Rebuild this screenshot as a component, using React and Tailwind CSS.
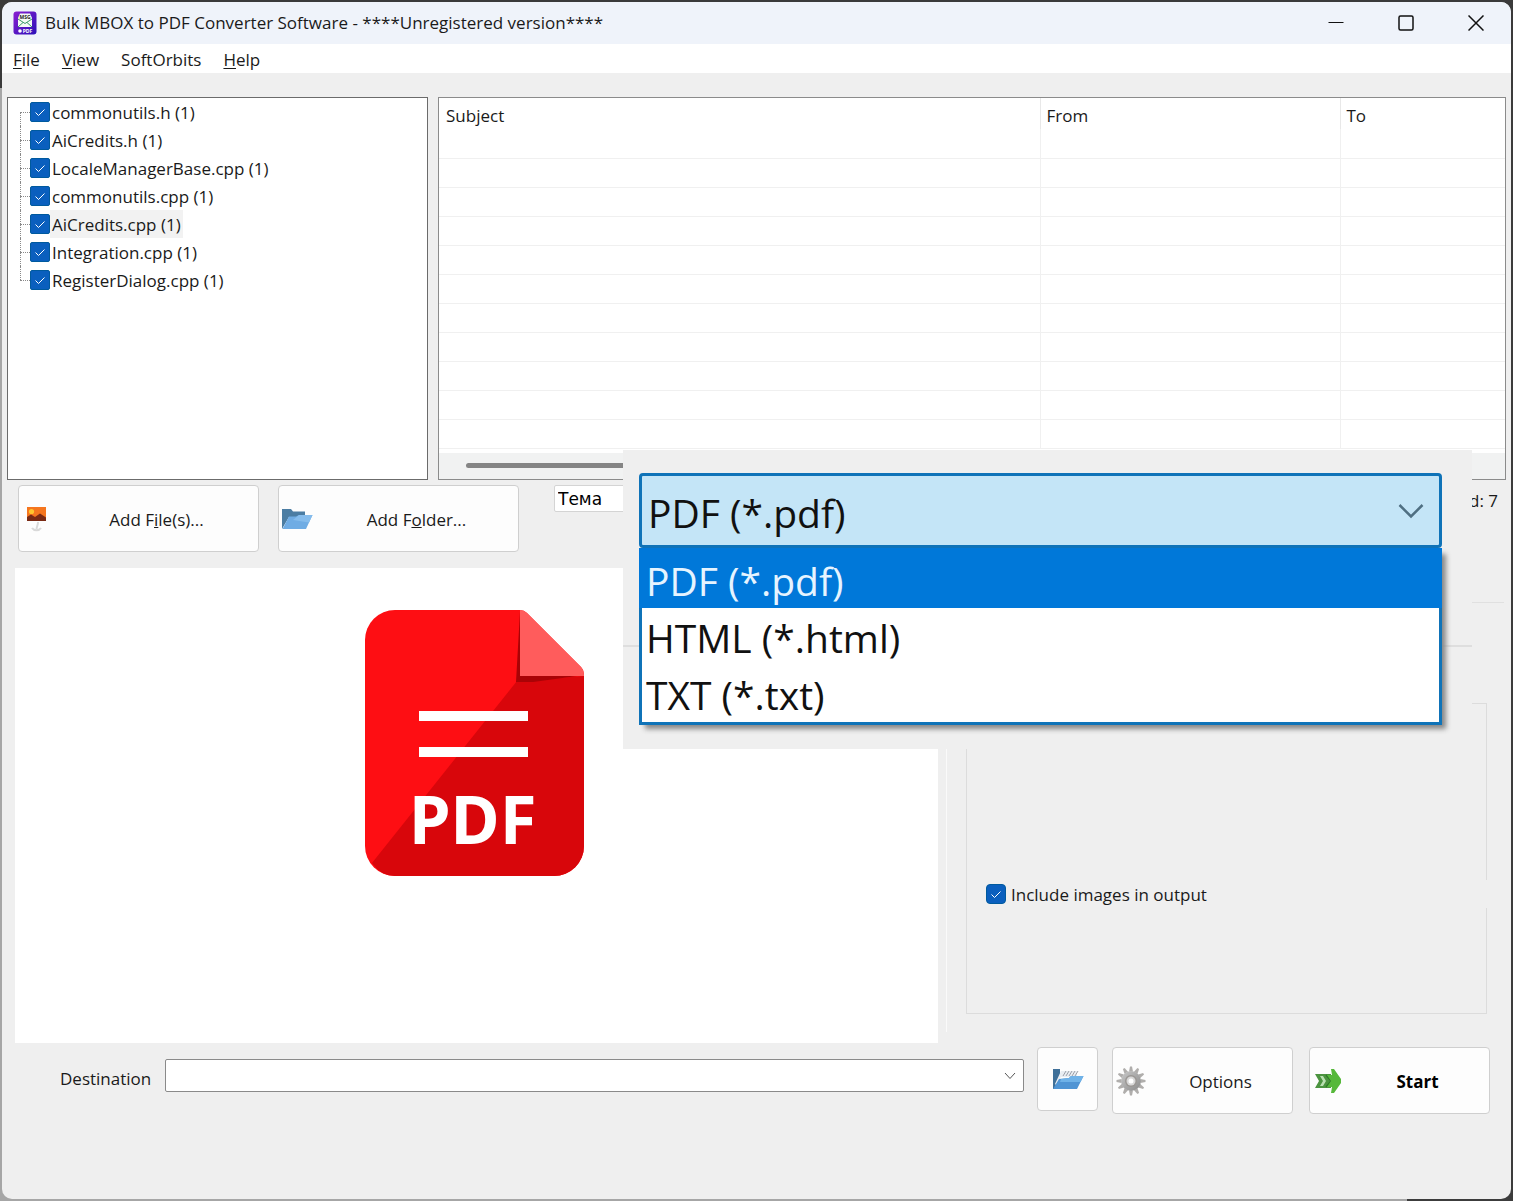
import { useState } from "react"

const MENU = [
    { key: "F", rest: "ile" },
    { key: "V", rest: "iew" },
    { key: "", rest: "SoftOrbits" },
    { key: "H", rest: "elp" },
]

const FILES = [
    "commonutils.h (1)",
    "AiCredits.h (1)",
    "LocaleManagerBase.cpp (1)",
    "commonutils.cpp (1)",
    "AiCredits.cpp (1)",
    "Integration.cpp (1)",
    "RegisterDialog.cpp (1)",
]

const FORMATS = ["PDF (*.pdf)", "HTML (*.html)", "TXT (*.txt)"]

function AppIcon() {
    return (
        <svg width="24" height="24" viewBox="0 0 24 24" aria-hidden="true">
            <defs>
                <linearGradient id="appBg" x1="0" y1="0" x2="1" y2="1">
                    <stop offset="0" stopColor="#8a1fd0" />
                    <stop offset="1" stopColor="#2a10b8" />
                </linearGradient>
            </defs>
            <rect x="0.5" y="0.5" width="23" height="23" rx="3" fill="url(#appBg)" />
            <path d="M5 7 L7 2.500 H17 L19 7 V16 H5 Z" fill="#f4fbf4" />
            <path d="M5 8 L12 12.500 L19 8 M5 16 L10 11.500 M19 16 L14 11.500" fill="none" stroke="#3a9a6a" strokeWidth="1" />
            <text x="12" y="7.5" textAnchor="middle" fontSize="5" fontWeight="700" fontFamily="Open Sans, sans-serif" fill="#222">
                MSG
            </text>
            <circle cx="7" cy="20" r="1.8" fill="#fff" />
            <text x="14.5" y="22" textAnchor="middle" fontSize="5" fontWeight="700" fontFamily="Open Sans, sans-serif" fill="#fff">
                PDF
            </text>
        </svg>
    )
}

function PictureIcon() {
    return (
        <svg width="22" height="26" viewBox="0 0 22 26" aria-hidden="true">
            <rect x="1" y="1" width="19" height="14" fill="#f5761f" />
            <circle cx="5.500" cy="5.500" r="2.600" fill="#ffc62e" />
            <path d="M1 11 L5 8.500 L9 11 L14 7.500 L20 11.500 V15 H1 Z" fill="#7a2a14" />
            <path d="M12 16 C12 19 11 20 10.500 23 M6 22 C8 25 13 25 15 22" fill="none" stroke="#d9d9d9" strokeWidth="2" />
        </svg>
    )
}

function FolderIcon() {
    return (
        <svg width="32" height="22" viewBox="0 0 32 22" aria-hidden="true">
            <path d="M1 21 V1 H10 L12 3.5 H24 V9 H8 Z" fill="#4b7da3" />
            <path d="M1.500 21 L8 8.500 H15 L18 7 H31.500 L25 21 Z" fill="#6face4" />
            <path d="M18 7 H31.500 L28 14.500 L12 12 Z" fill="#85bcec" />
        </svg>
    )
}

function OpenFolderIcon() {
    return (
        <svg width="32" height="22" viewBox="0 0 32 22" aria-hidden="true">
            <path d="M1 21 V1 H8 V8 L3 21 Z" fill="#3f7099" />
            <path d="M3 16 L9 3 H25 V9 H9 L4 17 Z" fill="#e9edf2" />
            <path d="M11 8 L14 3 M14 8 L17 3 M17 8 L20 3 M20 8 L23 3 M23 8 L26 3" stroke="#9b9fa8" strokeWidth="1" />
            <path d="M1 21 L7 11 L17 10 L19 8 H31.500 L25 21 Z" fill="#4f94d4" />
            <path d="M19 8 H31.500 L28.500 14 L8 14 L9 11 L17 10 Z" fill="#6fb2e8" />
        </svg>
    )
}

function GearIcon() {
    const teeth = [0, 30, 60, 90, 120, 150, 180, 210, 240, 270, 300, 330]
    return (
        <svg width="30" height="30" viewBox="0 0 30 30" aria-hidden="true">
            <defs>
                <linearGradient id="gear" x1="0" y1="0" x2="1" y2="1">
                    <stop offset="0" stopColor="#c8c8c8" />
                    <stop offset="1" stopColor="#8a8a8a" />
                </linearGradient>
            </defs>
            {teeth.map((a) => (
                <path key={a} d="M13 5.500 L14 0.500 H16 L17 5.500 Z" fill="#b0aeac" transform={`rotate(${a} 15 15)`} />
            ))}
            <circle cx="15" cy="15" r="10" fill="url(#gear)" />
            <circle cx="15" cy="15" r="6" fill="#9a9794" />
            <circle cx="15" cy="15" r="4.500" fill="#d8d8d8" />
            <circle cx="15" cy="15" r="2.500" fill="#fff" />
        </svg>
    )
}

function StartIcon() {
    return (
        <svg width="28" height="26" viewBox="0 0 28 26" aria-hidden="true">
            <path d="M1 6 H17 V20 H1 L5 13 Z" fill="#4c9440" />
            <path d="M6 8 H9 L12 13 L9 18 H6 L9 13 Z" fill="#b9dfb0" />
            <path d="M12 7 L17 13 L12 19" fill="none" stroke="#2f7a28" strokeWidth="1.500" />
            <path d="M17 1 H20 L27 11 V15 L20 25 H17 L18 19 H13 L17 13 L13 7 H18 Z" fill="#56b83a" />
        </svg>
    )
}

function PdfPicture() {
    return (
        <svg width="220" height="266" viewBox="0 0 220 266" aria-hidden="true">
            <path
                d="M30 0 H155 Q159 0 162 3 L216 57 Q219 60 219 64 V236 A30 30 0 0 1 189 266 H30 A30 30 0 0 1 0 236 V30 A30 30 0 0 1 30 0 Z"
                fill="#fe0e13"
            />
            <path d="M152 71 L219 66 V236 A30 30 0 0 1 189 266 H30 Q16 266 7 253 Z" fill="#d8060b" />
            <path d="M155 2 L151 72 L168 72 L212 66 L155 66 Z" fill="#a90306" />
            <path d="M155 0 Q159 0 162 3 L216 57 Q219 60 219 66 H155 Z" fill="#ff5c5c" />
            <rect x="54" y="101" width="109" height="10" fill="#fff" />
            <rect x="54" y="137" width="109" height="10" fill="#fff" />
            <text x="44" y="234" fontSize="67" fontWeight="700" fontFamily="Noto Sans, sans-serif" fill="#fff">
                PDF
            </text>
        </svg>
    )
}

function CheckBox({ id, className }) {
    const [checked, setChecked] = useState(true)
    return (
        <span className="grid size-5 shrink-0">
            <input
                id={id}
                type="checkbox"
                checked={checked}
                onChange={(e) => setChecked(e.target.checked)}
                className={`col-start-1 row-start-1 size-5 appearance-none border border-[#005a9e] bg-white checked:bg-[#0a5fbe] ${className}`}
            />
            <svg className="pointer-events-none col-start-1 row-start-1" width="20" height="20" viewBox="0 0 20 20" aria-hidden="true">
                <path d="M5.500 10.500 L8.500 13.500 L14.500 7.500" fill="none" stroke="#fff" strokeWidth="1" />
            </svg>
        </span>
    )
}

function ToolButton({ icon, className, children }) {
    return (
        <button type="button" className={`flex h-[67px] items-center rounded border border-[#cfcfcf] bg-[#fdfdfd] ${className}`}>
            <span className="flex w-9 shrink-0 justify-center">{icon}</span>
            <span className="flex-1 pt-0.5 text-center">{children}</span>
        </button>
    )
}

function TitleBar() {
    return (
        <header className="flex h-[42px] items-center bg-[#eff3fa] pl-[11px]">
            <AppIcon />
            <h1 className="ml-2 flex-1">Bulk MBOX to PDF Converter Software - ****Unregistered version****</h1>
            <button type="button" aria-label="Minimize" className="flex h-full w-[70px] items-center justify-center">
                <svg width="16" height="16" viewBox="0 0 16 16">
                    <path d="M0.500 7.500 H15.500" stroke="#111" />
                </svg>
            </button>
            <button type="button" aria-label="Maximize" className="flex h-full w-[70px] items-center justify-center">
                <svg width="16" height="16" viewBox="0 0 16 16">
                    <rect x="1" y="1" width="14" height="14" rx="1.500" fill="none" stroke="#111" strokeWidth="1.500" />
                </svg>
            </button>
            <button type="button" aria-label="Close" className="flex h-full w-[70px] items-center justify-center">
                <svg width="16" height="16" viewBox="0 0 16 16">
                    <path d="M0.500 0.500 L15.500 15.500 M15.500 0.500 L0.500 15.500" stroke="#111" strokeWidth="1.500" />
                </svg>
            </button>
        </header>
    )
}

function FileTree() {
    return (
        <div className="w-[421px] shrink-0 border border-[#6b6b6b] bg-white pl-3">
            <ul>
                {FILES.map((name, i) => (
                    <li key={name} className="flex h-7 items-center">
                        <span className="flex h-full w-[10px] shrink-0 flex-col">
                            <span className={`h-1/2 border-dotted border-[#8a8a8a] ${i === 0 ? "" : "border-l"}`}></span>
                            <span
                                className={`h-1/2 border-t border-dotted border-[#8a8a8a] ${i === FILES.length - 1 ? "" : "border-l"}`}
                            ></span>
                        </span>
                        <CheckBox id={`file-${i}`} className="rounded-xs" />
                        <label htmlFor={`file-${i}`} className={`h-full px-[2px] leading-[30px] ${i === 4 ? "bg-[#f2f2f2]" : ""}`}>
                            {name}
                        </label>
                    </li>
                ))}
            </ul>
        </div>
    )
}

function MessageTable() {
    const rows = Array.from({ length: 11 })
    return (
        <div className="flex flex-1 flex-col border border-[#8b8b8b] bg-white">
            <table className="w-full table-fixed border-collapse">
                <thead>
                    <tr className="h-[31px] text-left">
                        <th className="border-r border-[#e8e8e8] px-[7px] pt-[5px] pb-0 font-normal">Subject</th>
                        <th className="w-[300px] border-r border-[#e8e8e8] px-[6px] pt-[5px] pb-0 font-normal">From</th>
                        <th className="w-[165px] px-[6px] pt-[5px] pb-0 font-normal">To</th>
                    </tr>
                </thead>
                <tbody>
                    {rows.map((_, i) => (
                        <tr key={i} className="h-[29px] border-b border-[#f0f0f0]">
                            <td className="border-r border-[#f0f0f0] p-0"></td>
                            <td className="border-r border-[#f0f0f0] p-0"></td>
                            <td className="p-0"></td>
                        </tr>
                    ))}
                </tbody>
            </table>
            <div className="mt-auto flex h-[26px] items-center bg-[#f1f2f2] px-[27px] pb-0.5">
                <div className="h-[5px] w-3/5 rounded-full bg-[#858585]"></div>
            </div>
        </div>
    )
}

function FormatPopup() {
    const [format, setFormat] = useState(FORMATS[0])
    return (
        <section className="absolute top-[377px] right-[39px] w-[849px] bg-[#efefef] pt-[23px] pr-[30px] pb-6 pl-4 text-[39px] text-[#111]">
            <hr className="absolute top-[195px] right-0 left-0 border-t-2 border-[#dedede]" />
            <div className="relative grid items-center">
                <select
                    aria-label="Output format"
                    value={format}
                    onChange={(e) => setFormat(e.target.value)}
                    className="col-start-1 row-start-1 h-[75px] appearance-none rounded-sm border-3 border-[#0f73b8] bg-[#c4e5f7] px-[6px] pt-1 leading-[60px]"
                >
                    {FORMATS.map((f) => (
                        <option key={f}>{f}</option>
                    ))}
                </select>
                <svg
                    className="pointer-events-none col-start-1 row-start-1 mr-[18px] justify-self-end"
                    width="26"
                    height="16"
                    viewBox="0 0 26 16"
                    aria-hidden="true"
                >
                    <path d="M1.500 2 L13 13.500 L24.500 2" fill="none" stroke="#4f6f82" strokeWidth="2.500" />
                </svg>
            </div>
            <ul role="listbox" aria-label="Formats" className="relative border-3 border-t-0 border-[#0f73b8] bg-white shadow-[5px_5px_5px_-1px_#888888]">
                {FORMATS.map((f) => (
                    <li
                        key={f}
                        role="option"
                        aria-selected={f === format}
                        onClick={() => setFormat(f)}
                        className={
                            f === format
                                ? "-mx-[3px] h-[60px] bg-[#0078d9] px-[7px] leading-[66px] text-[#e6f4ff]"
                                : "h-[57px] px-1 leading-[60px]"
                        }
                    >
                        {f}
                    </li>
                ))}
            </ul>
        </section>
    )
}

function App() {
    return (
        <div className="flex min-h-screen bg-[linear-gradient(#3a3a3a_88px,transparent_88px),linear-gradient(to_right,#a6a6a6_93%,#3c3c3c_93%)] p-[2px] font-['Open_Sans',sans-serif] text-[17px] leading-6 text-[#1a1a1a]">
            <div className="flex flex-1 flex-col overflow-hidden rounded-[10px] bg-[#efefef]">
                <TitleBar />
                <nav className="flex h-[29px] items-center bg-white pt-[3px]">
                    {MENU.map((m) => (
                        <button type="button" key={m.rest} className="px-[11px]">
                            <span className="underline underline-offset-2">{m.key}</span>
                            {m.rest}
                        </button>
                    ))}
                </nav>

                <main className="relative flex flex-1 flex-col pt-6">
                    <div className="flex h-[383px] gap-[10px] px-[5px]">
                        <FileTree />
                        <MessageTable />
                    </div>

                    <div className="flex h-[88px] items-start pt-[5px] pr-[13px] pl-4">
                        <ToolButton icon={<PictureIcon />} className="w-[241px]">
                            Add F<u>i</u>le(s)...
                        </ToolButton>
                        <ToolButton icon={<FolderIcon />} className="ml-[19px] w-[241px]">
                            Add F<u>o</u>lder...
                        </ToolButton>
                        <input
                            aria-label="Subject filter"
                            defaultValue="Тема"
                            className="ml-[35px] h-[27px] w-60 rounded-xs border border-[#d4d4d4] bg-white px-[3px] font-['DejaVu_Sans',sans-serif] text-[17px] text-black"
                        />
                        <span className="ml-auto pt-1">d: 7</span>
                    </div>

                    <div className="flex">
                        <div className="ml-[13px] flex h-[475px] flex-1 justify-center bg-white pt-[42px] pr-1">
                            <PdfPicture />
                        </div>
                        <div className="mb-[11px] ml-2 w-px bg-[#fafafa]"></div>
                        <div className="mr-[7px] ml-[19px] w-[538px] pt-[34px]">
                            <hr className="border-[#e0e0e0]" />
                            <fieldset className="mt-[100px] mr-[17px] h-[311px] border border-[#dcdcdc] pt-[176px] pl-[19px]">
                                <div className="-mr-px flex h-7 items-center gap-[5px] bg-[#efefef]">
                                    <CheckBox id="include-images" className="rounded-sm" />
                                    <label htmlFor="include-images" className="pt-0.5">
                                        Include images in output
                                    </label>
                                </div>
                            </fieldset>
                        </div>
                    </div>

                    <div className="flex items-start pt-1 pr-[21px] pl-[58px]">
                        <label htmlFor="destination" className="mt-5 w-[105px]">
                            Destination
                        </label>
                        <div className="mt-3 grid flex-1 items-center">
                            <select
                                id="destination"
                                className="col-start-1 row-start-1 h-[33px] appearance-none rounded-xs border border-[#8a8a8a] bg-white px-2"
                            ></select>
                            <svg
                                className="pointer-events-none col-start-1 row-start-1 mr-2 justify-self-end"
                                width="12"
                                height="8"
                                viewBox="0 0 12 8"
                                aria-hidden="true"
                            >
                                <path d="M1 1 L6 6.500 L11 1" fill="none" stroke="#555" strokeWidth="1" />
                            </svg>
                        </div>
                        <button
                            type="button"
                            aria-label="Browse"
                            className="ml-[13px] flex h-16 w-[61px] items-center justify-center rounded border border-[#cfcfcf] bg-[#fdfdfd]"
                        >
                            <OpenFolderIcon />
                        </button>
                        <ToolButton icon={<GearIcon />} className="ml-[14px] w-[181px]">
                            Options
                        </ToolButton>
                        <ToolButton icon={<StartIcon />} className="ml-4 w-[181px] font-bold text-black">
                            Start
                        </ToolButton>
                    </div>

                    <FormatPopup />
                </main>
            </div>
        </div>
    )
}

export default App
